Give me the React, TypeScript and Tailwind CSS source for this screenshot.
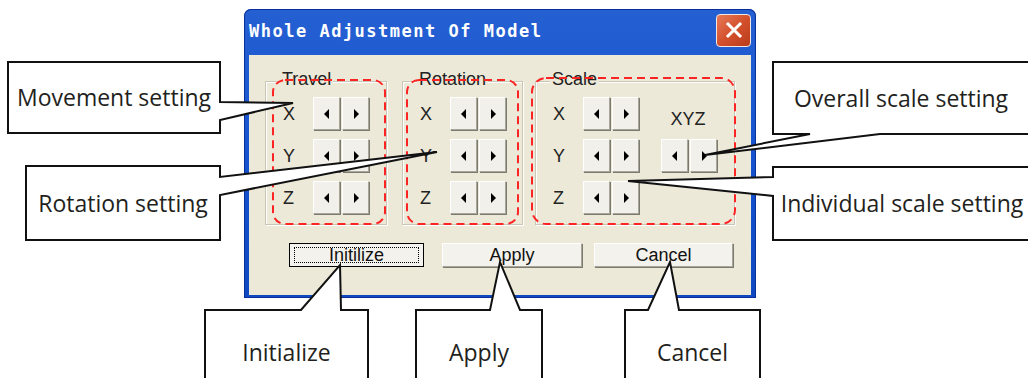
import React from 'react';

const ArrowBtn: React.FC<{ dir: 'l' | 'r' }> = ({ dir }) => (
  <div className="w-[27px] h-[33px] flex items-center justify-center bg-[#f1f0ea] border border-t-white border-l-white border-r-[#a7a69b] border-b-[#a7a69b] shadow-[1px_1px_0_#7c7a6f]">
    <svg width="6" height="10" viewBox="0 0 6 10">
      {dir === 'l' ? <polygon points="5,0 5,10 0,5" fill="#000" /> : <polygon points="1,0 1,10 6,5" fill="#000" />}
    </svg>
  </div>
);

const Pair: React.FC = () => (
  <div className="flex gap-[2px]">
    <ArrowBtn dir="l" />
    <ArrowBtn dir="r" />
  </div>
);

const Row: React.FC<{ axis: string; children?: React.ReactNode }> = ({ axis, children }) => (
  <div className="flex items-center h-[33px]">
    <span className="w-[30px] text-[18px] leading-none text-[#222]">{axis}</span>
    <Pair />
    {children}
  </div>
);

const Group: React.FC<{ title: string; width: string; children: React.ReactNode }> = ({ title, width, children }) => (
  <div className={`relative ${width} h-[144px] border border-[#c9c6b6] shadow-[inset_1px_1px_0_#fff,1px_1px_0_#fff] pl-[17px] pt-[15px] flex flex-col gap-[9px]`}>
    <span className="absolute left-[14px] -top-[12px] px-[2px] bg-[#ece9d8] text-[18px] leading-none text-[#222]">{title}</span>
    {children}
  </div>
);

const DlgButton: React.FC<{ label: string; width: string; isDefault?: boolean; className?: string }> = ({ label, width, isDefault, className }) => (
  <div
    className={`${width} h-[24px] flex items-center justify-center bg-[#f3f2ec] text-[18px] leading-none text-[#111] ${
      isDefault ? 'border border-black' : 'border border-t-white border-l-white border-r-[#a7a69b] border-b-[#a7a69b] shadow-[1px_1px_0_#7c7a6f]'
    } ${className ?? ''}`}
  >
    {isDefault ? (
      <div className="w-[calc(100%-8px)] h-[16px] border border-dotted border-black flex items-center justify-center">{label}</div>
    ) : (
      label
    )}
  </div>
);

const callouts = [
  { pts: '8,62 220,62 220,102 293,103 220,120 220,133 8,133', box: 'left-[8px] top-[62px] w-[212px] h-[71px]', text: 'Movement setting' },
  { pts: '26,166 220,166 220,177 437,152 220,195 220,240 26,240', box: 'left-[26px] top-[166px] w-[194px] h-[74px]', text: 'Rotation setting' },
  { pts: '773,62 1032,62 1032,134 880,134 705,155 810,134 773,134', box: 'left-[773px] top-[62px] w-[256px] h-[72px]', text: 'Overall scale setting' },
  { pts: '773,167 1032,167 1032,240 773,240 773,196 628,181 773,177', box: 'left-[773px] top-[167px] w-[258px] h-[73px]', text: 'Individual scale setting' },
  { pts: '205,310 301,310 340,265 341,310 368,310 368,396 205,396', box: 'left-[205px] top-[310px] w-[163px] h-[84px]', text: 'Initialize' },
  { pts: '416,310 490,310 500,262 520,310 542,310 542,396 416,396', box: 'left-[416px] top-[310px] w-[126px] h-[84px]', text: 'Apply' },
  { pts: '625,310 648,310 670,262 679,310 760,310 760,396 625,396', box: 'left-[625px] top-[310px] w-[135px] h-[84px]', text: 'Cancel' },
];

export default function App() {
  return (
    <div className="relative w-[1028px] h-[378px] bg-white overflow-hidden font-['Liberation_Sans',Arial,sans-serif]">
      <div className="ml-[244px] pt-[9px]">
        <div className="w-[512px] h-[289px] flex flex-col rounded-t-[7px] bg-gradient-to-b from-[#2560d2] via-[#1553cf] to-[#0f49c2] shadow-[inset_0_0_0_1px_#0a2f9a]">
          <div className="h-[46px] flex items-center justify-between pl-[5px] pr-[5px]">
            <span className="font-['DejaVu_Sans_Mono',monospace] font-bold text-[17px] tracking-[1.5px] text-white">Whole Adjustment Of Model</span>
            <div className="w-[35px] h-[33px] rounded-[4px] border border-[#f3e7e2] bg-gradient-to-br from-[#e67a58] via-[#d4502c] to-[#b93c1c] flex items-center justify-center mb-[4px]">
              <svg width="18" height="18" viewBox="0 0 18 18">
                <path d="M3 3 L15 15 M15 3 L3 15" stroke="#fff" strokeWidth="3" strokeLinecap="square" />
              </svg>
            </div>
          </div>
          <div className="flex-1 mx-[5px] mb-[3px] bg-[#ece9d8] flex flex-col">
            <div className="flex pl-[16px] pt-[26px]">
              <Group title="Travel" width="w-[122px]">
                <Row axis="X" />
                <Row axis="Y" />
                <Row axis="Z" />
              </Group>
              <div className="w-[15px]" />
              <Group title="Rotation" width="w-[121px]">
                <Row axis="X" />
                <Row axis="Y" />
                <Row axis="Z" />
              </Group>
              <div className="w-[12px]" />
              <Group title="Scale" width="w-[200px]">
                <Row axis="X">
                  <span className="ml-[22px] w-[54px] pt-[10px] text-center text-[18px] leading-none text-[#222]">XYZ</span>
                </Row>
                <Row axis="Y">
                  <div className="ml-[22px] flex gap-[2px]">
                    <ArrowBtn dir="l" />
                    <ArrowBtn dir="r" />
                  </div>
                </Row>
                <Row axis="Z" />
              </Group>
            </div>
            <div className="flex pl-[40px] pt-[18px]">
              <DlgButton label="Initilize" width="w-[135px]" isDefault />
              <DlgButton label="Apply" width="w-[140px]" className="ml-[18px]" />
              <DlgButton label="Cancel" width="w-[139px]" className="ml-[12px]" />
            </div>
          </div>
        </div>
      </div>

      <svg className="absolute inset-0" width="1028" height="378" viewBox="0 0 1028 378">
        <g fill="none" stroke="#ff2424" strokeWidth="2" strokeDasharray="8 5">
          <rect x="273" y="80" width="112" height="144" rx="12" />
          <rect x="407" y="80" width="111" height="144" rx="12" />
          <rect x="532" y="78" width="203" height="146" rx="14" />
        </g>
        <g fill="#fff" stroke="#111" strokeWidth="2" strokeLinejoin="miter">
          {callouts.map((c) => (
            <polygon key={c.text} points={c.pts} />
          ))}
        </g>
      </svg>

      {callouts.map((c) => (
        <div key={c.text} className={`absolute ${c.box} flex items-center justify-center font-['Open_Sans',sans-serif] text-[23px] leading-none text-[#231f20] whitespace-nowrap`}>
          {c.text}
        </div>
      ))}
    </div>
  );
}
